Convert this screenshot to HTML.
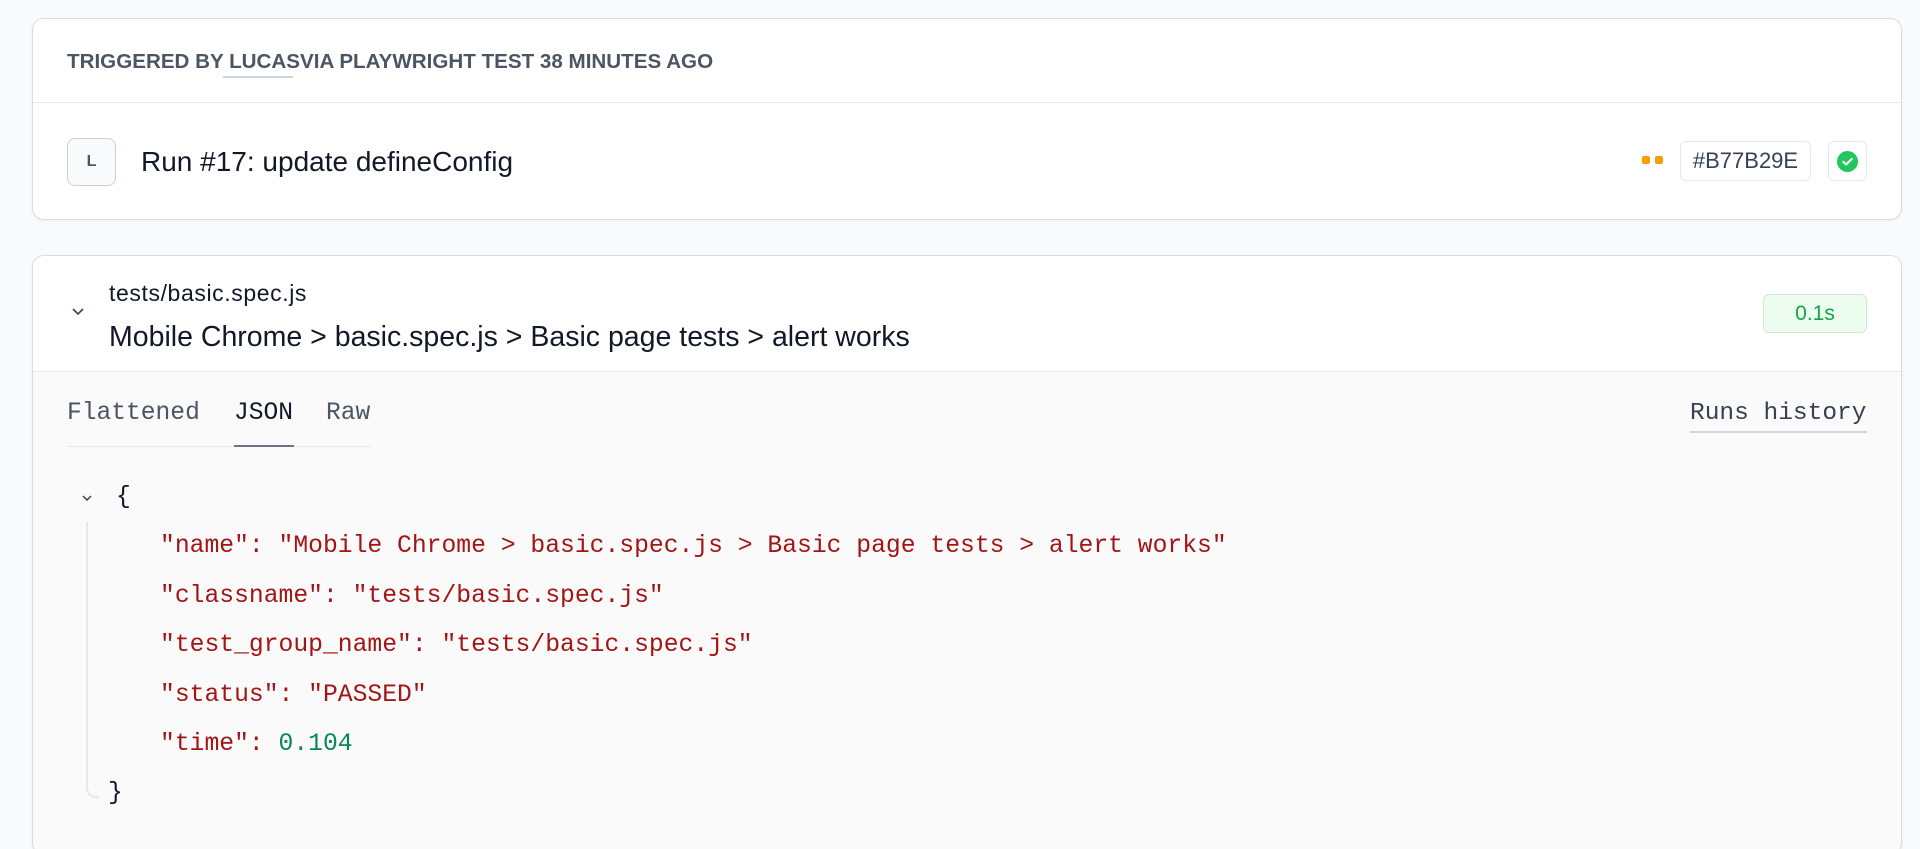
<!DOCTYPE html>
<html><head><meta charset="utf-8"><style>
*{box-sizing:border-box;margin:0;padding:0}
html,body{width:1920px;height:849px;overflow:hidden}
body{background:#f9fafb;font-family:"Liberation Sans",sans-serif;position:relative;color:#111827}
.a{position:absolute;white-space:nowrap}
.card{position:absolute;background:#fff;border:1px solid #d9dde3;border-radius:12px;box-shadow:0 1px 3px rgba(0,0,0,.05)}
.mono{font-family:"Liberation Mono",monospace}
.s{color:#a31515}
</style></head><body>
<div class="card" style="left:32px;top:18px;width:1870px;height:202px"></div>
<div class="a" style="left:33px;top:102px;width:1868px;height:1px;background:#e5e7eb"></div>
<div class="a" style="left:67px;top:50px;font-size:20.6px;font-weight:bold;color:#4b5563">TRIGGERED BY LUCASVIA PLAYWRIGHT TEST 38 MINUTES AGO</div>
<div class="a" style="left:223px;top:76px;width:70px;height:2px;background:#d1d5db"></div>
<div class="a" style="left:67px;top:138px;width:49px;height:48px;border:1.5px solid #cbd0d7;border-radius:8px;background:#f9fafb;font-size:16px;font-weight:bold;color:#4b5563;text-align:center;line-height:45px">L</div>
<div class="a" style="left:141px;top:146px;font-size:28px"><span style="font-weight:500">Run #17:</span> update defineConfig</div>
<div class="a" style="left:1642px;top:156px;width:8px;height:8px;background:#f59e0b;border-radius:2px"></div>
<div class="a" style="left:1655px;top:156px;width:8px;height:8px;background:#f59e0b;border-radius:2px"></div>
<div class="a" style="left:1680px;top:141px;width:131px;height:40px;border:1px solid #e5e7eb;border-radius:6px;font-size:22px;color:#374151;text-align:center;line-height:38px">#B77B29E</div>
<div class="a" style="left:1828px;top:141px;width:39px;height:40px;border:1px solid #e5e7eb;border-radius:6px"></div>
<svg class="a" style="left:1837px;top:151px" width="21" height="21" viewBox="0 0 20 20"><circle cx="10" cy="10" r="10" fill="#22c55e"/><path d="M6 10.3l2.7 2.6L14 7.6" stroke="#fff" stroke-width="2" fill="none" stroke-linecap="round" stroke-linejoin="round"/></svg>

<div class="card" style="left:32px;top:255px;width:1870px;height:600px;background:#fafafa;overflow:hidden">
<div style="height:116px;background:#fff;border-bottom:1px solid #e5e7eb"></div></div>
<svg class="a" style="left:71px;top:307px" width="14" height="10" viewBox="0 0 14 10"><path d="M2 2l5 5 5-5" stroke="#374151" stroke-width="1.6" fill="none"/></svg>
<div class="a" style="left:109px;top:280px;font-size:23px;letter-spacing:0.6px">tests/basic.spec.js</div>
<div class="a" style="left:109px;top:321px;font-size:28.5px">Mobile Chrome &gt; basic.spec.js &gt; Basic page tests &gt; alert works</div>
<div class="a" style="left:1763px;top:294px;width:104px;height:39px;border:1px solid #d1e7d6;border-radius:6px;background:#ecfdf0;color:#16a34a;font-size:21px;text-align:center;line-height:37px">0.1s</div>

<div class="a mono" style="left:67px;top:400px;font-size:24.6px;color:#4b5563">Flattened</div>
<div class="a mono" style="left:234px;top:400px;font-size:24.6px;color:#111827">JSON</div>
<div class="a mono" style="left:326px;top:400px;font-size:24.6px;color:#4b5563">Raw</div>
<div class="a" style="left:67px;top:446px;width:304px;height:1px;background:#e5e7eb"></div>
<div class="a" style="left:234px;top:445px;width:60px;height:2px;background:#6b7280"></div>
<div class="a mono" style="left:1690px;top:400px;font-size:24.5px;color:#374151">Runs history</div>
<div class="a" style="left:1690px;top:431px;width:177px;height:2px;background:#d1d5db"></div>

<svg class="a" style="left:81px;top:494px" width="12" height="9" viewBox="0 0 12 9"><path d="M2 2l4 4 4-4" stroke="#374151" stroke-width="1.5" fill="none"/></svg>
<div class="a mono" style="left:116px;top:483px;font-size:24.7px;color:#111827">{</div>
<div class="a" style="left:86px;top:522px;width:13px;height:276px;border-left:2px solid #e5e7eb;border-bottom:2px solid #e5e7eb;border-bottom-left-radius:10px"></div>
<div class="a mono s" style="left:160px;top:532px;font-size:24.7px">"name": "Mobile Chrome &gt; basic.spec.js &gt; Basic page tests &gt; alert works"</div>
<div class="a mono s" style="left:160px;top:582px;font-size:24.7px">"classname": "tests/basic.spec.js"</div>
<div class="a mono s" style="left:160px;top:631px;font-size:24.7px">"test_group_name": "tests/basic.spec.js"</div>
<div class="a mono s" style="left:160px;top:681px;font-size:24.7px">"status": "PASSED"</div>
<div class="a mono s" style="left:160px;top:730px;font-size:24.7px">"time": <span style="color:#098658">0.104</span></div>
<div class="a mono" style="left:108px;top:779px;font-size:24.7px;color:#111827">}</div>
</body></html>
